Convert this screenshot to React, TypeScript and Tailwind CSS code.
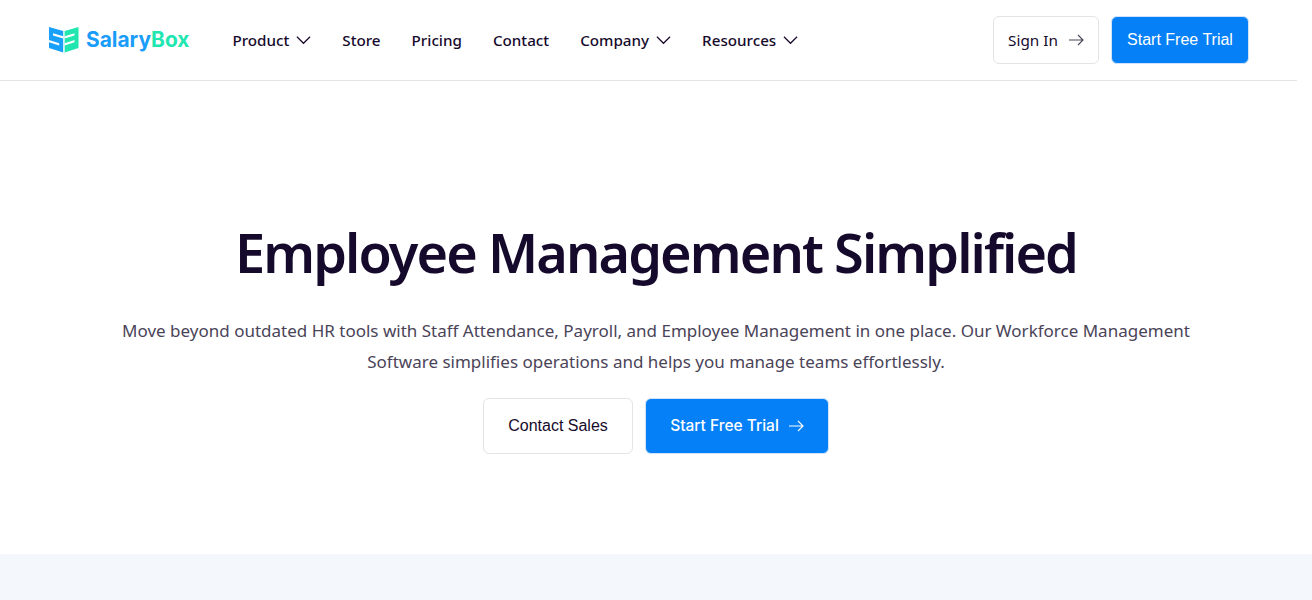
import React from "react";

const Chevron = () => (
  <svg width="15" height="10" viewBox="0 0 16 10" fill="none" stroke="#1a0b2e" strokeWidth="1.3" className="ml-[7px]">
    <path d="M1 1.5 L8 8.5 L15 1.5" />
  </svg>
);

const Arrow = ({ color }: { color: string }) => (
  <svg width="16" height="12" viewBox="0 0 16 12" fill="none" stroke={color} strokeWidth="1.1">
    <path d="M1 6 H15 M10 1 L15 6 L10 11" />
  </svg>
);

const Logo = () => (
  <svg width="30" height="26" viewBox="0 0 30 26" className="shrink-0">
    <path d="M0 0 L14.2 4 V25.5 L0 21 Z" fill="#18a0fb" />
    <path d="M29.5 0 L15.6 4 V25.5 L29.5 21 Z" fill="#22e6b0" />
    <path d="M4 6.2 L14.2 9.2 V11.4 L4 8.4 Z M0 13 L10.2 16.2 V18.4 L0 15.2 Z" fill="#ffffff" />
    <path d="M25.5 6.2 L15.6 9.2 V11.4 L25.5 8.4 Z M25.5 13 L15.6 16.2 V18.4 L25.5 15.2 Z" fill="#ffffff" />
  </svg>
);

const Nav = ({ label, chevron }: { label: string; chevron?: boolean }) => (
  <a className="flex items-center text-[15.2px] font-medium text-[#160a2c]">
    {label}
    {chevron && <Chevron />}
  </a>
);

export default function App() {
  return (
    <div className="h-[600px] overflow-hidden bg-white font-['Noto_Sans',sans-serif]">
      <header className="flex h-[81px] w-[1297px] items-center border-b border-[#e3e3e8] pl-[49px] pr-[48px]">
        <div className="flex items-center">
          <Logo />
          <span className="ml-[7px] font-['Inter',sans-serif] text-[20.9px] font-bold">
            <span className="text-[#1a9cfb]">Salary</span>
            <span className="text-[#22e6b0]">Box</span>
          </span>
        </div>
        <nav className="ml-[43px] flex items-center gap-[31px]">
          <Nav label="Product" chevron />
          <Nav label="Store" />
          <Nav label="Pricing" />
          <Nav label="Contact" />
          <Nav label="Company" chevron />
          <Nav label="Resources" chevron />
        </nav>
        <div className="ml-auto flex items-center gap-[12px]">
          <a className="flex h-[48px] w-[106px] items-center justify-center gap-[10px] rounded-md border border-[#e3e3e8] text-[15.3px] text-[#160a2c]">
            Sign In
            <Arrow color="#4a4458" />
          </a>
          <a className="flex h-[48px] w-[138px] items-center justify-center rounded-md border border-[#cfe4fb] bg-[#0580f6] font-['Liberation_Sans',sans-serif] text-[16px] text-white">
            Start Free Trial
          </a>
        </div>
      </header>
      <main className="flex h-[473px] flex-col items-center pt-[135px]">
        <h1 className="text-[54px] leading-[72px] font-semibold tracking-[-1.9px] text-[#160a2c]">Employee Management Simplified</h1>
        <p className="mt-[27px] w-[1100px] text-center text-[17px] leading-[31px] text-[#4a4458]">
          Move beyond outdated HR tools with Staff Attendance, Payroll, and Employee Management in one place. Our Workforce Management Software simplifies operations and helps you manage teams effortlessly.
        </p>
        <div className="mt-[21px] flex gap-[12px]">
          <a className="flex h-[56px] w-[150px] items-center justify-center rounded-md border border-[#e3e3e8] font-['Liberation_Sans',sans-serif] text-[16px] text-[#160a2c]">
            Contact Sales
          </a>
          <a className="flex h-[56px] w-[184px] items-center justify-center gap-[9px] rounded-md border border-[#cfe4fb] bg-[#0580f6] font-['Inter',sans-serif] text-[15.5px] font-medium text-white">
            Start Free Trial
            <Arrow color="#ffffff" />
          </a>
        </div>
      </main>
      <div className="h-[46px] bg-[#f4f7fc]" />
    </div>
  );
}
